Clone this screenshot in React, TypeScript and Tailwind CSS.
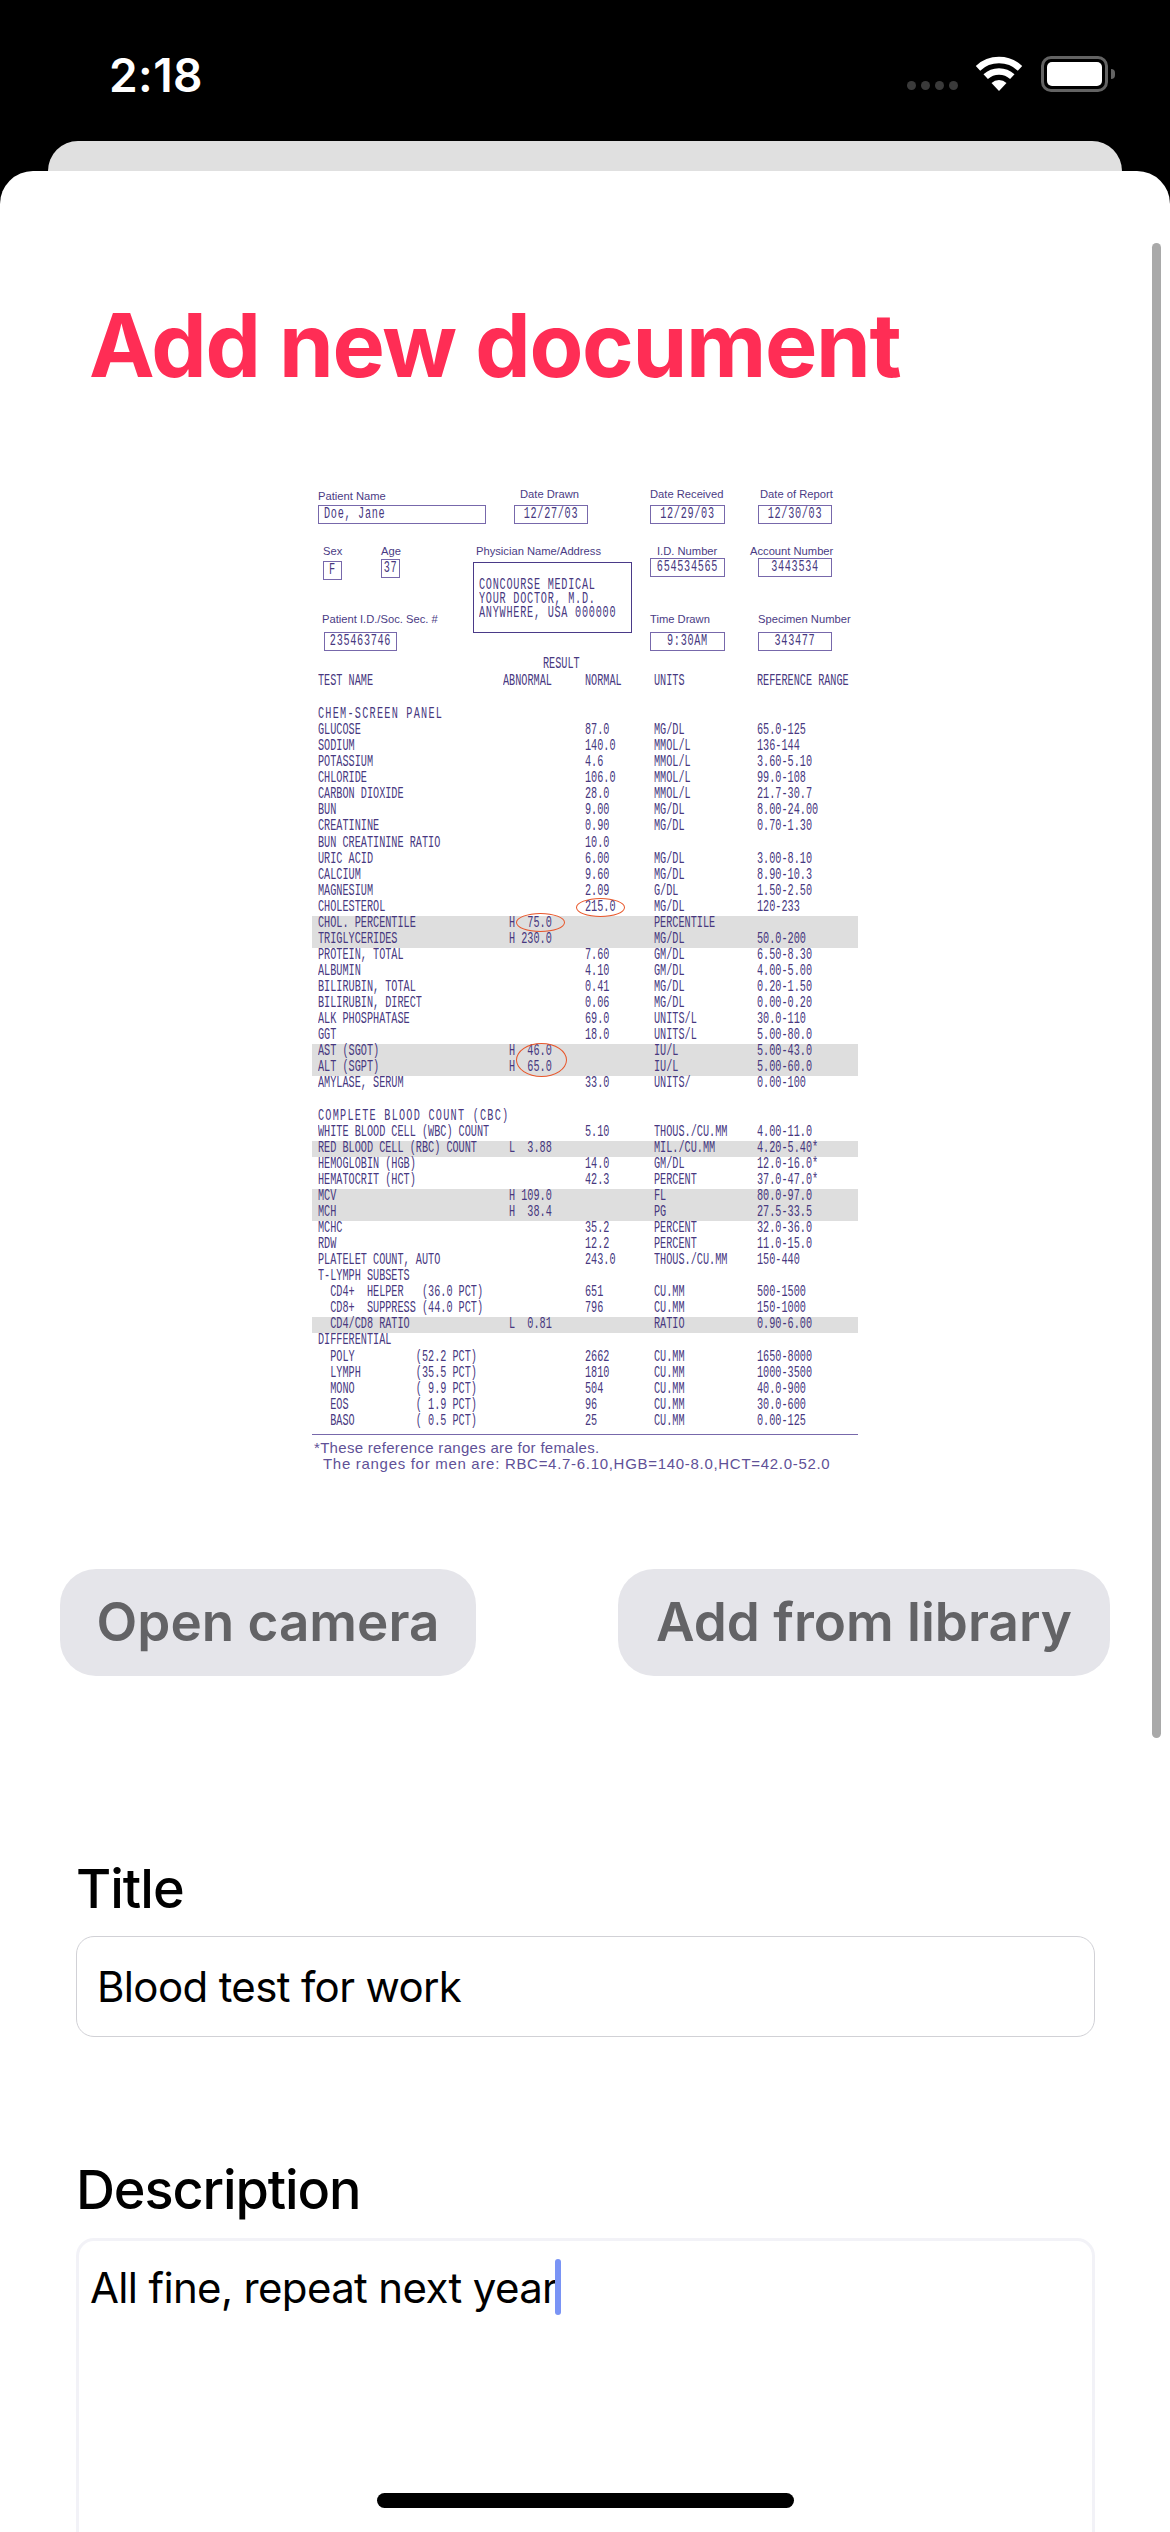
type Row = {
  name?: string;
  abn?: string;
  norm?: string;
  unit?: string;
  range?: string;
  band?: boolean;
  wide?: boolean;
};

const ROWS: Row[] = [
  { name: "CHEM-SCREEN PANEL", wide: true },
  { name: "GLUCOSE", norm: "87.0", unit: "MG/DL", range: "65.0-125" },
  { name: "SODIUM", norm: "140.0", unit: "MMOL/L", range: "136-144" },
  { name: "POTASSIUM", norm: "4.6", unit: "MMOL/L", range: "3.60-5.10" },
  { name: "CHLORIDE", norm: "106.0", unit: "MMOL/L", range: "99.0-108" },
  { name: "CARBON DIOXIDE", norm: "28.0", unit: "MMOL/L", range: "21.7-30.7" },
  { name: "BUN", norm: "9.00", unit: "MG/DL", range: "8.00-24.00" },
  { name: "CREATININE", norm: "0.90", unit: "MG/DL", range: "0.70-1.30" },
  { name: "BUN CREATININE RATIO", norm: "10.0" },
  { name: "URIC ACID", norm: "6.00", unit: "MG/DL", range: "3.00-8.10" },
  { name: "CALCIUM", norm: "9.60", unit: "MG/DL", range: "8.90-10.3" },
  { name: "MAGNESIUM", norm: "2.09", unit: "G/DL", range: "1.50-2.50" },
  { name: "CHOLESTEROL", norm: "215.0", unit: "MG/DL", range: "120-233" },
  { name: "CHOL. PERCENTILE", abn: "H  75.0", unit: "PERCENTILE", band: true },
  { name: "TRIGLYCERIDES", abn: "H 230.0", unit: "MG/DL", range: "50.0-200", band: true },
  { name: "PROTEIN, TOTAL", norm: "7.60", unit: "GM/DL", range: "6.50-8.30" },
  { name: "ALBUMIN", norm: "4.10", unit: "GM/DL", range: "4.00-5.00" },
  { name: "BILIRUBIN, TOTAL", norm: "0.41", unit: "MG/DL", range: "0.20-1.50" },
  { name: "BILIRUBIN, DIRECT", norm: "0.06", unit: "MG/DL", range: "0.00-0.20" },
  { name: "ALK PHOSPHATASE", norm: "69.0", unit: "UNITS/L", range: "30.0-110" },
  { name: "GGT", norm: "18.0", unit: "UNITS/L", range: "5.00-80.0" },
  { name: "AST (SGOT)", abn: "H  46.0", unit: "IU/L", range: "5.00-43.0", band: true },
  { name: "ALT (SGPT)", abn: "H  65.0", unit: "IU/L", range: "5.00-60.0", band: true },
  { name: "AMYLASE, SERUM", norm: "33.0", unit: "UNITS/", range: "0.00-100" },
  {},
  { name: "COMPLETE BLOOD COUNT (CBC)", wide: true },
  { name: "WHITE BLOOD CELL (WBC) COUNT", norm: "5.10", unit: "THOUS./CU.MM", range: "4.00-11.0" },
  { name: "RED BLOOD CELL (RBC) COUNT", abn: "L  3.88", unit: "MIL./CU.MM", range: "4.20-5.40*", band: true },
  { name: "HEMOGLOBIN (HGB)", norm: "14.0", unit: "GM/DL", range: "12.0-16.0*" },
  { name: "HEMATOCRIT (HCT)", norm: "42.3", unit: "PERCENT", range: "37.0-47.0*" },
  { name: "MCV", abn: "H 109.0", unit: "FL", range: "80.0-97.0", band: true },
  { name: "MCH", abn: "H  38.4", unit: "PG", range: "27.5-33.5", band: true },
  { name: "MCHC", norm: "35.2", unit: "PERCENT", range: "32.0-36.0" },
  { name: "RDW", norm: "12.2", unit: "PERCENT", range: "11.0-15.0" },
  { name: "PLATELET COUNT, AUTO", norm: "243.0", unit: "THOUS./CU.MM", range: "150-440" },
  { name: "T-LYMPH SUBSETS" },
  { name: "  CD4+  HELPER   (36.0 PCT)", norm: "651", unit: "CU.MM", range: "500-1500" },
  { name: "  CD8+  SUPPRESS (44.0 PCT)", norm: "796", unit: "CU.MM", range: "150-1000" },
  { name: "  CD4/CD8 RATIO", abn: "L  0.81", unit: "RATIO", range: "0.90-6.00", band: true },
  { name: "DIFFERENTIAL" },
  { name: "  POLY          (52.2 PCT)", norm: "2662", unit: "CU.MM", range: "1650-8000" },
  { name: "  LYMPH         (35.5 PCT)", norm: "1810", unit: "CU.MM", range: "1000-3500" },
  { name: "  MONO          ( 9.9 PCT)", norm: "504", unit: "CU.MM", range: "40.0-900" },
  { name: "  EOS           ( 1.9 PCT)", norm: "96", unit: "CU.MM", range: "30.0-600" },
  { name: "  BASO          ( 0.5 PCT)", norm: "25", unit: "CU.MM", range: "0.00-125" },
];

function Scan({ children, className = "" }: { children?: React.ReactNode; className?: string }) {
  return (
    <span
      className={`block origin-center scale-y-[1.55] whitespace-pre font-['Liberation_Mono',monospace] text-[10.2px] leading-[16px] text-[#47387f] ${className}`}
    >
      {children}
    </span>
  );
}

function Label({ children, className = "" }: { children: React.ReactNode; className?: string }) {
  return (
    <span
      className={`block h-[14px] whitespace-nowrap font-['Liberation_Sans',sans-serif] text-[11.2px] leading-[14px] text-[#4a3b84] ${className}`}
    >
      {children}
    </span>
  );
}

function Box({ children, className = "" }: { children?: React.ReactNode; className?: string }) {
  return (
    <div className={`flex h-[19px] items-center justify-center border border-[#7768ab] ${className}`}>
      <Scan className="tracking-[0.7px]">{children}</Scan>
    </div>
  );
}

function LabRow({ row }: { row: Row }) {
  return (
    <div
      className={`grid h-[16.07px] grid-cols-[191px_76px_69px_103px_101px] pl-[6px] ${row.band ? "bg-[#dedede]" : ""}`}
    >
      <Scan className={row.wide ? "tracking-[1.25px]" : ""}>{row.name}</Scan>
      <Scan>{row.abn}</Scan>
      <Scan>{row.norm}</Scan>
      <Scan>{row.unit}</Scan>
      <Scan>{row.range}</Scan>
    </div>
  );
}

function LabReport() {
  return (
    <div className="relative mx-auto mt-[95px] w-[546px]">
      {/* form header */}
      <div className="flex h-[34px] items-end">
        <div className="ml-[6px] w-[168px]">
          <Label className="mb-[2px]">Patient Name</Label>
          <Box className="justify-start pl-[5px]">Doe, Jane</Box>
        </div>
        <div className="ml-[28px] w-[74px]">
          <Label className="mb-[4px] ml-[6px]">Date Drawn</Label>
          <Box>12/27/03</Box>
        </div>
        <div className="ml-[62px] w-[75px]">
          <Label className="mb-[4px]">Date Received</Label>
          <Box>12/29/03</Box>
        </div>
        <div className="ml-[33px] w-[74px]">
          <Label className="mb-[4px] ml-[2px]">Date of Report</Label>
          <Box>12/30/03</Box>
        </div>
      </div>

      <div className="mt-[20px] grid grid-cols-[161px_159px_18px_75px_33px_74px] grid-rows-[68px_39px]">
        <div className="flex items-start pl-[11px]">
          <div className="w-[19px]">
            <Label>Sex</Label>
            <Box className="mt-[3px]">F</Box>
          </div>
          <div className="ml-[39px] w-[19px]">
            <Label>Age</Label>
            <Box className="mt-[1px]">37</Box>
          </div>
        </div>
        <div className="row-span-2">
          <Label className="ml-[3px]">Physician Name/Address</Label>
          <div className="mt-[4px] flex h-[71px] flex-col justify-center gap-[1px] border border-[#4a3a88] pl-[5px]">
            <Scan className="h-[13px] leading-[13px] tracking-[0.75px]">CONCOURSE MEDICAL</Scan>
            <Scan className="h-[13px] leading-[13px] tracking-[0.75px]">YOUR DOCTOR, M.D.</Scan>
            <Scan className="h-[13px] leading-[13px] tracking-[0.75px]">ANYWHERE, USA 000000</Scan>
          </div>
        </div>
        <div />
        <div>
          <Label className="ml-[7px]">I.D. Number</Label>
          <Box>654534565</Box>
        </div>
        <div />
        <div>
          <Label className="-ml-[8px]">Account Number</Label>
          <Box>3443534</Box>
        </div>
        <div className="col-start-1 row-start-2 pl-[10px]">
          <Label>Patient I.D./Soc. Sec. #</Label>
          <Box className="ml-[2px] mt-[6px] w-[73px]">235463746</Box>
        </div>
        <div className="col-start-4 row-start-2">
          <Label>Time Drawn</Label>
          <Box className="mt-[6px]">9:30AM</Box>
        </div>
        <div className="col-start-6 row-start-2">
          <Label>Specimen Number</Label>
          <Box className="mt-[6px]">343477</Box>
        </div>
      </div>

      {/* column headings */}
      <div className="mt-[6px] h-[16px] pl-[231px]">
        <Scan>RESULT</Scan>
      </div>
      <div className="mb-[17px] mt-[1px] grid h-[16px] grid-cols-[191px_76px_69px_103px_101px] pl-[6px]">
        <Scan>TEST NAME</Scan>
        <Scan className="-ml-[6px]">ABNORMAL</Scan>
        <Scan>NORMAL</Scan>
        <Scan>UNITS</Scan>
        <Scan>REFERENCE RANGE</Scan>
      </div>

      {ROWS.map((row, i) => (
        <LabRow key={i} row={row} />
      ))}

      <div className="mt-[4px] h-[1px] bg-[#7768ab]" />
      <p className="mt-[5px] whitespace-pre pl-[2px] font-['Liberation_Sans',sans-serif] text-[15px] leading-[16px] tracking-[0.3px] text-[#5f5197]">
        *These reference ranges are for females.
      </p>
      <p className="whitespace-pre pl-[11px] font-['Liberation_Sans',sans-serif] text-[15px] leading-[16px] tracking-[0.7px] text-[#5f5197]">
        The ranges for men are: RBC=4.7-6.10,HGB=140-8.0,HCT=42.0-52.0
      </p>

      {/* hand-drawn circles on the scan */}
      <div className="absolute left-[264px] top-[408px] h-[19px] w-[49px] rounded-[50%] border border-[#e8562a]" />
      <div className="absolute left-[204px] top-[423px] h-[19px] w-[49px] rounded-[50%] border border-[#e8562a]" />
      <div className="absolute left-[204px] top-[553px] h-[34px] w-[51px] rounded-[50%] border border-[#e8562a]" />
    </div>
  );
}

function StatusBar() {
  return (
    <div className="flex h-[141px] items-start justify-between pl-[109px] pr-[55px] pt-[56px]">
      <span className="font-['Inter',sans-serif] text-[46px] font-semibold leading-[38px] tracking-[0.4px] text-white">
        2:18
      </span>
      <div className="flex items-start">
        <div className="mr-[17px] mt-[25px] flex gap-[5px]">
          <span className="h-[9px] w-[9px] rounded-full bg-[#3a3a3a]" />
          <span className="h-[9px] w-[9px] rounded-full bg-[#3a3a3a]" />
          <span className="h-[9px] w-[9px] rounded-full bg-[#3a3a3a]" />
          <span className="h-[9px] w-[9px] rounded-full bg-[#3a3a3a]" />
        </div>
        <svg width="48" height="36" viewBox="0 0 48 36" fill="none">
          <path d="M3 12.3A31 31 0 0 1 45 12.3" stroke="white" strokeWidth="6.5" />
          <path d="M10.7 20.7A19.5 19.5 0 0 1 37.3 20.7" stroke="white" strokeWidth="6.5" />
          <path d="M24 35L16.5 27A11 11 0 0 1 31.5 27Z" fill="white" />
        </svg>
        <div className="ml-[18px] h-[36px] w-[67px] rounded-[10px] border-[3px] border-[#636363] p-[3px]">
          <div className="h-full w-full rounded-[5px] bg-white" />
        </div>
        <div className="ml-[3px] mt-[13px] h-[10px] w-[4px] rounded-r-full bg-[#636363]" />
      </div>
    </div>
  );
}

export default function App() {
  return (
    <div className="relative h-[2532px] w-[1170px] overflow-hidden bg-black font-['Inter',sans-serif]">
      <StatusBar />
      <div className="mx-[48px] h-[30px] rounded-t-[30px] bg-[#e0e0e0]" />
      <div className="h-[2361px] rounded-t-[33px] bg-white pt-[124px]">
        <h1 className="pl-[89px] text-[88px] font-bold leading-[100px] tracking-[-1.35px] text-[#ff2d55]">
          Add new document
        </h1>

        <LabReport />

        <div className="mt-[97px] flex justify-between px-[60px]">
          <button className="h-[107px] w-[416px] rounded-[36px] bg-[#e5e5ea] text-[53px] font-semibold text-[#636366]">
            Open camera
          </button>
          <button className="h-[107px] w-[492px] rounded-[36px] bg-[#e5e5ea] text-[53px] font-semibold text-[#636366]">
            Add from library
          </button>
        </div>

        <div className="mt-[181px] px-[76px]">
          <label className="block text-[54px] font-medium leading-[64px] tracking-[-1px] text-black">
            Title
          </label>
          <div className="mt-[15px] flex h-[101px] w-[1019px] items-center rounded-[18px] border-[1.5px] border-[#d1d1d6] pl-[20px] pt-[2px] text-[42px] leading-[50px] tracking-[-0.65px] text-black">
            Blood test for work
          </div>

          <label className="mt-[121px] block text-[54px] font-medium leading-[64px] tracking-[-1.1px] text-black">
            Description
          </label>
          <div className="mt-[16px] h-[400px] w-[1019px] rounded-[18px] border-[3px] border-[#f2f2f7] pl-[11px] pt-[22px] text-[42px] leading-[50px] tracking-[-0.65px] text-black">
            <span className="relative">
              All fine, repeat next year
              <span className="absolute -right-[4px] -top-[3px] h-[56px] w-[6px] rounded-full bg-[#7a94f5]" />
            </span>
          </div>
        </div>
      </div>

      <div className="absolute left-[1152px] top-[243px] h-[1495px] w-[9px] rounded-full bg-[#a9a9a9]" />
      <div className="absolute left-[377px] top-[2493px] h-[15px] w-[417px] rounded-full bg-black" />
    </div>
  );
}
